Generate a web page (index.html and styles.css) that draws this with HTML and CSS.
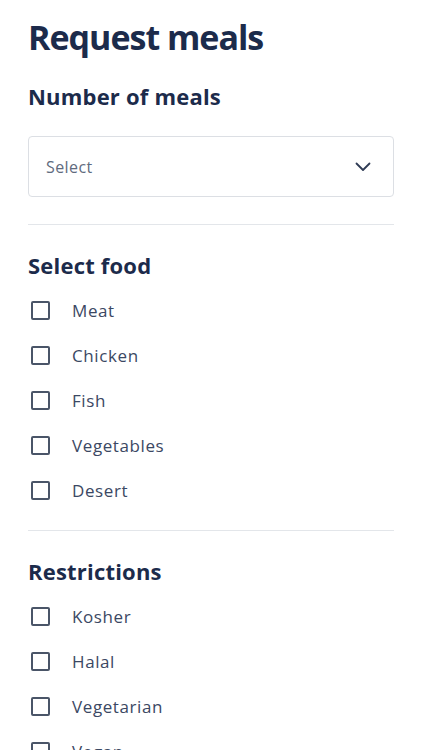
FILE: index.html
```html
<!DOCTYPE html>
<html lang="en">
<head>
  <meta charset="UTF-8">
  <title>Request meals</title>
  <link rel="stylesheet" href="styles.css">
</head>
<body>

  <h1 class="title">Request meals</h1>

  <h2 class="section-title">Number of meals</h2>
  <div class="select">
    <span class="select-text">Select</span>
    <svg class="chevron" width="16" height="10" viewBox="0 0 16 10">
      <path d="M1.5 1.5 L8 8 L14.5 1.5" fill="none" stroke="#2f3b55" stroke-width="1.8" stroke-linecap="round" stroke-linejoin="round"/>
    </svg>
  </div>

  <hr class="divider divider-first">

  <h2 class="section-title">Select food</h2>
  <ul class="options">
    <li class="option"><span class="box"></span><span class="label">Meat</span></li>
    <li class="option"><span class="box"></span><span class="label">Chicken</span></li>
    <li class="option"><span class="box"></span><span class="label">Fish</span></li>
    <li class="option"><span class="box"></span><span class="label">Vegetables</span></li>
    <li class="option"><span class="box"></span><span class="label">Desert</span></li>
  </ul>

  <hr class="divider">

  <h2 class="section-title">Restrictions</h2>
  <ul class="options">
    <li class="option"><span class="box"></span><span class="label">Kosher</span></li>
    <li class="option"><span class="box"></span><span class="label">Halal</span></li>
    <li class="option"><span class="box"></span><span class="label">Vegetarian</span></li>
    <li class="option"><span class="box"></span><span class="label">Vegan</span></li>
  </ul>

</body>
</html>
```

FILE: styles.css
```css
body {
  margin: 0;
  padding: 17px 28px 0;
  background: #fff;
  font-family: "Open Sans", Lato, sans-serif;
  color: #1c2b4b;
}

.title {
  margin: 0 0 25px;
  font-size: 34px;
  line-height: 40px;
  font-weight: 700;
  letter-spacing: -1px;
}

.section-title {
  margin: 0;
  font-size: 22px;
  line-height: 28px;
  font-weight: 700;
  letter-spacing: 0.2px;
}

.select {
  display: flex;
  align-items: center;
  justify-content: space-between;
  height: 61px;
  box-sizing: border-box;
  margin-top: 26px;
  padding: 0 22px 0 17px;
  border: 1px solid #dcdfe4;
  border-radius: 4px;
}

.select-text {
  font-size: 16px;
  letter-spacing: 0.4px;
  color: #5f6b7e;
}

.divider {
  margin: 17px 0 26px;
  border: none;
  border-top: 1px solid #e3e6ea;
}

.divider-first {
  margin-top: 27px;
}

.options {
  list-style: none;
  margin: 9px 0 0;
  padding: 0;
}

.option {
  display: flex;
  align-items: center;
  height: 45px;
}

.box {
  width: 19px;
  height: 19px;
  box-sizing: border-box;
  margin-left: 3px;
  border: 2px solid #4a5568;
  border-radius: 2px;
}

.label {
  margin-left: 22px;
  font-size: 17px;
  letter-spacing: 0.6px;
  color: #3b4863;
}
```
